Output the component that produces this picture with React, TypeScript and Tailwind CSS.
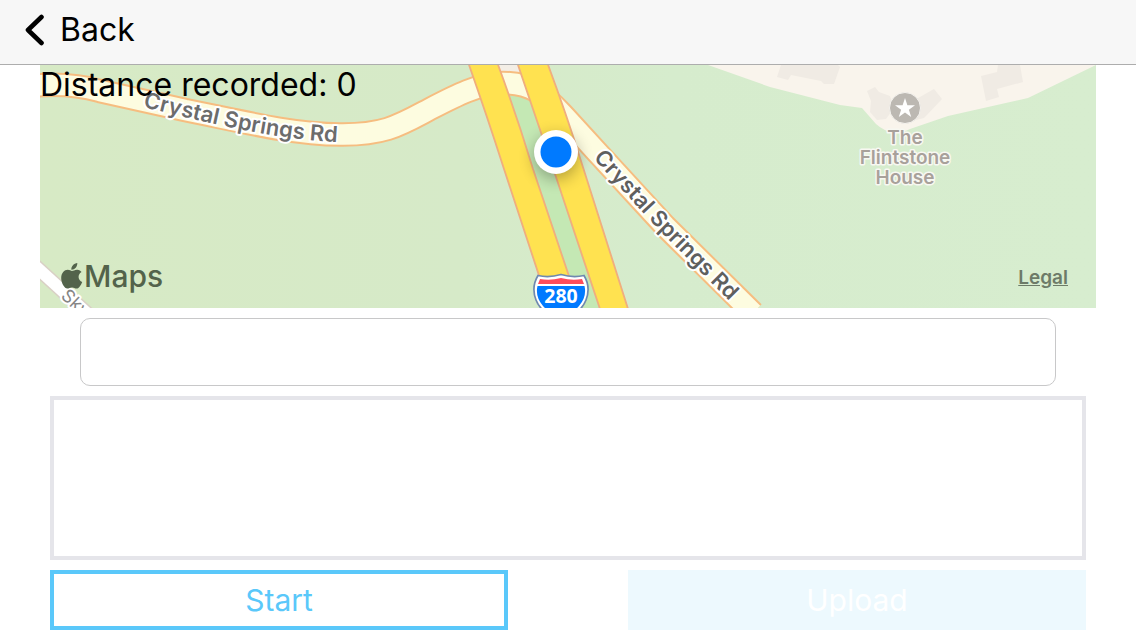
import React from "react";

const ROAD =
  "M30 86 C50 84 75 84 100 91 L185 110 C240 121 290 134 340 134.500 C385 135 400 125 430 109 C455 96 480 83 503 83 C535 83 546 97 565 117 L596 151 L665 226 L753 313";

const label = "font-['Inter','Liberation_Sans',sans-serif] font-semibold";

function MapDrawing() {
  return (
    <svg
      className="block h-full w-full"
      viewBox="40 65 1056 243"
      preserveAspectRatio="xMidYMid slice"
      role="img"
      aria-label="Map of Interstate 280 at Crystal Springs Rd"
    >
      <defs>
        <linearGradient id="land" x1="0" x2="1" y1="0" y2="0">
          <stop offset="0" stopColor="#d7eac5" />
          <stop offset="0.4" stopColor="#d6eac8" />
          <stop offset="0.6" stopColor="#d6eccd" />
          <stop offset="1" stopColor="#d7edcf" />
        </linearGradient>
        <filter id="glow" x="-100%" y="-100%" width="300%" height="300%">
          <feGaussianBlur stdDeviation="8" />
        </filter>
        <path id="west" d="M143 107 C195 119 275 142 360 143" />
        <path id="east" d="M593 158 L658 229 L760 332" />
      </defs>
      <rect x="40" y="65" width="1056" height="243" fill="url(#land)" />

      <path d="M708 65 L770 87 L840 105 L862 108 L876 124 Q884 131 892 132 Q902 133 910 129 L948 116 L1028 98 L1096 65 Z" fill="#f9f4ec" />
      <g fill="#f0ebe4">
        <path d="M781 65 L777 77 L788 80 L791 75 L821 81 L824 84 L834 84 L840 67 L838 65 Z" />
        <path d="M867 91 L875 87 L879 92 L890 96 L894 108 L886 119 L877 120 L870 112 L871 101 Z" />
        <path d="M913 101 L934 89 L942 99 L924 118 L912 121 L905 114 Z" />
        <path d="M998 65 L997 72 L981 76 L986 101 L999 97 L997 89 L1023 82 L1020 65 Z" />
      </g>

      <path d="M490 65 L522 65 L530 100 L605 308 L570 308 Z" fill="#c4e8b4" />
      <path d="M497 62 L520 62 L524 78 L502 78 Z" fill="#f3eee6" />

      <path d={ROAD} fill="none" stroke="#f6bd80" strokeWidth="24.500" />
      <path d={ROAD} fill="none" stroke="#fdfce0" strokeWidth="20.500" />

      <g fill="#ffe250" stroke="#f0ae7e" strokeWidth="1.800">
        <path d="M468 62 Q486 113 504 169 L551 312 L581 312 L533 169 Q516 113 497 62 Z" />
        <path d="M517 62 L552 165 L601 312 L629 312 L581 161 Q566 113 547 62 Z" />
      </g>

      <path d="M32 263 L90 316" stroke="#d9d0c5" strokeWidth="15" />
      <path d="M32 263 L90 316" stroke="#ffffff" strokeWidth="12" />

      <g className={label} fontSize="22" fill="#6c6c6c" stroke="#ffffff" strokeWidth="4" strokeLinejoin="round" paintOrder="stroke">
        <text><textPath href="#west">Crystal Springs Rd</textPath></text>
        <text fill="#5f5f5f"><textPath href="#east">Crystal Springs Rd</textPath></text>
      </g>
      <text transform="translate(60 297) rotate(43)" className="font-['Inter','Liberation_Sans',sans-serif]" fontSize="18" fill="#858585" stroke="#ffffff" strokeWidth="4" strokeLinejoin="round" paintOrder="stroke">
        Sky
      </text>

      <g className={label} fontSize="19" textAnchor="middle" fill="#a8a19b" stroke="#f8f8f2" strokeWidth="3" strokeLinejoin="round" paintOrder="stroke">
        <text x="905" y="144">The</text>
        <text x="905" y="164">Flintstone</text>
        <text x="905" y="184">House</text>
      </g>
      <circle cx="905" cy="108" r="15.500" fill="#bcb8b2" stroke="#f5f3ef" strokeWidth="1" />
      <path d="M905 98 L907.400 105.200 L915 105.200 L908.900 109.700 L911.200 117 L905 112.600 L898.800 117 L901.100 109.700 L895 105.200 L902.600 105.200 Z" fill="#fff" />

      <path d="M538 275.500 Q549 278 561 274.500 Q573 278 584 275.500 Q591 287 586 300 Q581 313 561 322 Q541 313 536 300 Q531 287 538 275.500 Z" fill="#fff" stroke="#6f89b0" strokeWidth="1.700" />
      <path d="M540 279 Q550 281 561 278 Q572 281 582 279 L584 284 H538 Z" fill="#ff4c5b" />
      <path d="M537.500 286 H584.500 Q587 297 579 306 Q572 314 561 318 Q550 314 543 306 Q535 297 537.500 286 Z" fill="#007aff" />
      <text x="561" y="303" className="font-['Open_Sans','Liberation_Sans',sans-serif] font-bold" fontSize="19.500" fill="#fff" textAnchor="middle">280</text>

      <circle cx="556" cy="157" r="22" fill="#000" opacity="0.3" filter="url(#glow)" />
      <circle cx="556" cy="152" r="22" fill="#fff" />
      <circle cx="556" cy="152" r="15.500" fill="#007aff" />
    </svg>
  );
}

export default function App() {
  return (
    <div className="flex min-h-screen flex-col bg-white font-['Inter','Liberation_Sans',sans-serif] text-black">
      <header className="flex h-[65px] items-center border-b border-[#adadad] bg-[#f7f7f7] px-6 pb-1">
        <button type="button" className="flex items-center gap-4 text-[32px] leading-10">
          <svg className="h-8 w-5" viewBox="0 0 20 32" fill="none" aria-hidden="true">
            <path d="M17.500 3 L4 16 L17.500 29" stroke="#000" strokeWidth="4.600" strokeLinecap="round" strokeLinejoin="round" />
          </svg>
          Back
        </button>
      </header>

      <main className="flex flex-1 flex-col px-10">
        <section className="relative h-[243px] overflow-hidden">
          <MapDrawing />
          <p className="absolute top-0 left-0 text-[32px] leading-10">Distance recorded: 0</p>
          <div className="absolute bottom-3 left-5 flex items-center text-[#53634b]">
            <svg className="h-7 w-6" viewBox="0 0 24 28" fill="currentColor" aria-hidden="true">
              <path d="M17.300 1 C17.500 4.800 14.600 7.900 11.400 7.700 C11 4.300 14 1.300 17.300 1 Z M12 9 C13.300 9 14.800 7.600 17.300 7.700 C19.300 7.800 20.700 8.700 21.500 10 C17.200 12.500 17.900 18.300 22.200 20 C21.200 22.900 19 26.500 16.700 26.600 C14.900 26.700 14.200 25.500 12 25.500 C9.800 25.500 9 26.600 7.300 26.600 C4.600 26.600 1.200 21.200 1.200 16 C1.200 11 4.400 7.800 7.700 7.800 C9.600 7.800 11 9 12 9 Z" />
            </svg>
            <span className="text-[30px] leading-10 font-medium">Maps</span>
          </div>
          <a href="#legal" className="absolute right-7 bottom-4 text-[19px] leading-7 font-semibold text-[#6d7b68] underline">
            Legal
          </a>
        </section>

        <form className="flex flex-1 flex-col gap-2.5 px-2.5 py-2.5" onSubmit={(e) => e.preventDefault()}>
          <input
            type="text"
            aria-label="Title"
            className="mx-[30px] h-[68px] rounded-[10px] border border-[#c8c8c9] px-4 text-[30px] outline-none"
          />
          <textarea
            aria-label="Description"
            className="min-h-[164px] flex-1 resize-none border-4 border-[#e5e5ea] p-3 text-[30px] outline-none"
          />
          <div className="grid grid-cols-2 gap-[120px] text-[30px]">
            <button type="button" className="h-[60px] border-4 border-[#5ac8fa] text-[#5ac8fa]">
              Start
            </button>
            <button type="button" disabled className="h-[60px] bg-[#edf9fe] text-white">
              Upload
            </button>
          </div>
        </form>
      </main>
    </div>
  );
}
